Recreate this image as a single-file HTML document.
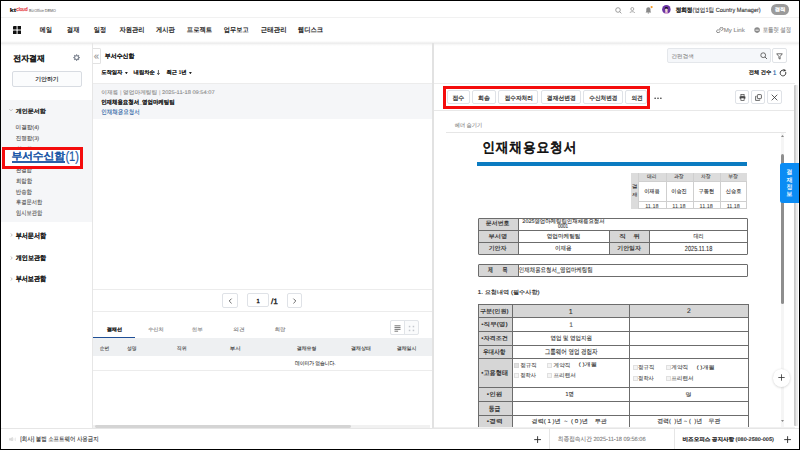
<!DOCTYPE html>
<html><head><meta charset="utf-8">
<style>
*{box-sizing:border-box;margin:0;padding:0}
html,body{width:800px;height:450px;overflow:hidden;background:#fff}
body{position:relative;font-family:"Liberation Sans",sans-serif;color:#222}
.a{position:absolute}
.t{position:absolute;white-space:nowrap;line-height:1}
.ln{position:absolute;background:#e9e9e9}
.btn{position:absolute;border:1px solid #dfe2e7;border-radius:2px;background:#fff}
.tx{position:absolute;left:0;top:0;overflow:visible}
.tx text{white-space:pre;font-family:"Liberation Sans",sans-serif;text-rendering:geometricPrecision}
.cb{position:absolute;width:5px;height:5px;border:0.6px solid #e0e0e0;background:#f4f4f4}
</style></head><body>

<!-- ===== TOP BAR ===== -->
<div class="ln" style="left:0;top:16.9px;width:800px;height:1px;background:#f1f1f1"></div>
<svg class="a" style="left:614.5px;top:6.8px" width="7" height="7" viewBox="0 0 7 7"><circle cx="3" cy="3" r="2.3" fill="none" stroke="#888" stroke-width="0.8"/><path d="M4.7 4.7L6.4 6.4" stroke="#888" stroke-width="0.8"/></svg>
<svg class="a" style="left:629.3px;top:6.8px" width="7" height="6.5" viewBox="0 0 7 6.5"><circle cx="3.3" cy="2" r="1.5" fill="none" stroke="#888" stroke-width="0.7"/><path d="M0.8 6.2C1 4.2 5.6 4.2 5.8 6.2" fill="none" stroke="#888" stroke-width="0.7"/></svg>
<svg class="a" style="left:644.5px;top:5.5px" width="9" height="8" viewBox="0 0 9 8"><path d="M0.6 6.4h5.6L5.5 5.3V3.4C5.5 2 4.6 1.2 3.4 1.2S1.3 2 1.3 3.4v1.9z" fill="#888"/><rect x="2.6" y="6.6" width="1.6" height="0.8" rx="0.4" fill="#888"/><circle cx="6.6" cy="1.1" r="1.1" fill="#f59a23"/></svg>
<svg class="a" style="left:662.4px;top:4.9px" width="8.8" height="8.8" viewBox="0 0 8.8 8.8"><defs><clipPath id="av"><circle cx="4.4" cy="4.4" r="4.3"/></clipPath></defs><g clip-path="url(#av)"><rect width="8.8" height="8.8" fill="#6b35a3"/><rect x="2.6" y="7.2" width="3.6" height="2" rx="1" fill="#f0b6d8"/><rect x="3.2" y="3.6" width="2.4" height="3.6" rx="0.9" fill="#f3d8d0"/><path d="M2.7 4.4C2.6 2.6 3.3 2.1 4.4 2.1S6.2 2.6 6.1 4.4L5.5 3.4H3.3z" fill="#1b1420"/></g></svg>
<div class="a" style="left:771.2px;top:4.1px;width:17.6px;height:10.5px;border-radius:5.3px;background:#9b9b9b"></div>

<!-- ===== NAV ===== -->
<svg class="a" style="left:12.6px;top:25.9px" width="8.2" height="8.2" viewBox="0 0 8.2 8.2"><rect x="0" y="0" width="3.6" height="3.6" rx="0.5" fill="#111"/><rect x="4.6" y="0" width="3.6" height="3.6" rx="0.5" fill="#111"/><rect x="0" y="4.6" width="3.6" height="3.6" rx="0.5" fill="#111"/><rect x="4.6" y="4.6" width="3.6" height="3.6" rx="0.5" fill="#111"/></svg>
<svg class="a" style="left:715.5px;top:27px" width="8" height="6" viewBox="0 0 8 6"><path d="M3.4 1.8L4.6 0.7a1.4 1.4 0 0 1 2 2L5.4 3.9M4.3 4.3L3.1 5.4a1.4 1.4 0 0 1-2-2L2.3 2.2M2.9 3.6l2-2" fill="none" stroke="#777" stroke-width="1"/></svg>
<svg class="a" style="left:753.9px;top:27px" width="6.2" height="6.2" viewBox="0 0 6.2 6.2"><circle cx="3.1" cy="3.1" r="2.8" fill="#8a8a8a"/><rect x="1.5" y="2.7" width="3.2" height="0.9" fill="#fff"/></svg>
<div class="a" style="left:0;top:41.2px;width:800px;height:4.4px;background:linear-gradient(180deg,rgba(0,0,0,0) 0,rgba(0,0,0,0.075) 45%,rgba(0,0,0,0.03) 70%,rgba(0,0,0,0) 100%)"></div>

<!-- ===== SIDEBAR ===== -->
<svg class="a" style="left:72.9px;top:53.7px" width="7.2" height="7.2" viewBox="0 0 10 10"><g fill="#848a96"><rect x="4.25" y="0.3" width="1.5" height="1.8" transform="rotate(0 5 5)"/><rect x="4.25" y="0.3" width="1.5" height="1.8" transform="rotate(45 5 5)"/><rect x="4.25" y="0.3" width="1.5" height="1.8" transform="rotate(90 5 5)"/><rect x="4.25" y="0.3" width="1.5" height="1.8" transform="rotate(135 5 5)"/><rect x="4.25" y="0.3" width="1.5" height="1.8" transform="rotate(180 5 5)"/><rect x="4.25" y="0.3" width="1.5" height="1.8" transform="rotate(225 5 5)"/><rect x="4.25" y="0.3" width="1.5" height="1.8" transform="rotate(270 5 5)"/><rect x="4.25" y="0.3" width="1.5" height="1.8" transform="rotate(315 5 5)"/></g><circle cx="5" cy="5" r="2.85" fill="none" stroke="#848a96" stroke-width="1.7"/></svg>
<div class="btn" style="left:11.5px;top:71px;width:70.5px;height:16.2px;background:#fbfcfd;border-color:#d8dce2"></div>

<div class="a" style="left:1px;top:100px;width:91px;height:122px;background:#f5f6f8"></div>
<svg class="a" style="left:9.3px;top:108.2px" width="4" height="4" viewBox="0 0 4 4"><path d="M0.4 1.2L2 2.8L3.6 1.2" fill="none" stroke="#999" stroke-width="0.6"/></svg>
<svg class="tx" width="800" height="450" viewBox="0 0 800 450"><text x="16.67" y="150.57" textLength="15.31" lengthAdjust="spacingAndGlyphs" style="font-size:5.889px;fill:#555;stroke:#555;stroke-width:0.113px;">완료함</text><text x="15.95" y="171.97" textLength="15.93" lengthAdjust="spacingAndGlyphs" style="font-size:5.889px;fill:#555;stroke:#555;stroke-width:0.113px;">완결함</text></svg>
<div class="a" style="left:1.7px;top:147.1px;width:81.5px;height:21.9px;border:3px solid #f40c0c;background:#fff"></div>
<div class="a" style="left:11.8px;top:161.4px;width:53.4px;height:1.3px;background:#2a5fa8"></div>
<svg class="a" style="left:9.7px;top:233.2px" width="3" height="4" viewBox="0 0 3 4"><path d="M0.6 0.4L2.3 2L0.6 3.6" fill="none" stroke="#999" stroke-width="0.6"/></svg>
<svg class="a" style="left:9.7px;top:255.6px" width="3" height="4" viewBox="0 0 3 4"><path d="M0.6 0.4L2.3 2L0.6 3.6" fill="none" stroke="#999" stroke-width="0.6"/></svg>
<svg class="a" style="left:9.7px;top:276.6px" width="3" height="4" viewBox="0 0 3 4"><path d="M0.6 0.4L2.3 2L0.6 3.6" fill="none" stroke="#999" stroke-width="0.6"/></svg>

<div class="ln" style="left:92px;top:43px;width:1px;height:385px;background:#e6e6e6"></div>

<!-- ===== LIST PANEL ===== -->
<div class="a" style="left:92.8px;top:48.2px;width:8.2px;height:16.2px;border:0.8px solid #e2e2e2;border-left:none;background:#fff;border-radius:0 1.5px 1.5px 0"></div>
<div class="ln" style="left:93px;top:83px;width:702px;height:0.8px;background:#ececec"></div>
<svg class="a" style="left:124.9px;top:71.6px" width="2.8" height="2.4" viewBox="0 0 2.8 2.4"><path d="M0 0H2.8L1.4 2.4z" fill="#222"/></svg>
<svg class="a" style="left:189.1px;top:71.6px" width="2.8" height="2.4" viewBox="0 0 2.8 2.4"><path d="M0 0H2.8L1.4 2.4z" fill="#222"/></svg>
<svg class="a" style="left:157.4px;top:70.2px" width="2.8" height="5" viewBox="0 0 2.8 5"><path d="M1.4 0V4.4M0.2 3.1L1.4 4.6L2.6 3.1" fill="none" stroke="#222" stroke-width="0.75"/></svg>
<div class="a" style="left:93px;top:83.8px;width:339px;height:35.7px;background:#f5f6f8"></div>

<div class="ln" style="left:93px;top:289px;width:339px;height:0.8px;background:#ececec"></div>
<div class="btn" style="left:222.3px;top:293.3px;width:15.4px;height:14.3px"></div>
<svg class="a" style="left:227.5px;top:297.5px" width="5" height="6" viewBox="0 0 5 6"><path d="M3.6 0.6L1.2 3L3.6 5.4" fill="none" stroke="#444" stroke-width="0.8"/></svg>
<div class="btn" style="left:246.6px;top:293.3px;width:22.8px;height:14px"></div>
<div class="btn" style="left:287.4px;top:293.3px;width:15px;height:14.3px"></div>
<svg class="a" style="left:292.4px;top:297.5px" width="5" height="6" viewBox="0 0 5 6"><path d="M1.4 0.6L3.8 3L1.4 5.4" fill="none" stroke="#444" stroke-width="0.8"/></svg>
<div class="ln" style="left:93px;top:311px;width:339px;height:0.8px;background:#ececec"></div>

<div class="a" style="left:93px;top:336.6px;width:41.5px;height:1.8px;background:#1f4f96"></div>
<div class="a" style="left:390.3px;top:320.2px;width:28.7px;height:15.3px;border:0.8px solid #e1e4e8;border-radius:2px;background:#fafbfc"></div>
<div class="a" style="left:390.3px;top:320.2px;width:14.6px;height:15.3px;border:0.8px solid #e1e4e8;border-radius:2px 0 0 2px;background:#fff"></div>
<svg class="a" style="left:393.8px;top:324.6px" width="7" height="7" viewBox="0 0 7 7"><path d="M0.5 0.8h6M0.5 2.6h6M0.5 4.4h6M0.5 6.2h3.6" stroke="#666" stroke-width="0.9"/></svg>
<svg class="a" style="left:408.2px;top:324.6px" width="7" height="7" viewBox="0 0 7 7"><rect x="0.8" y="0.8" width="1.5" height="1.5" fill="#c4c8ce"/><rect x="4.7" y="0.8" width="1.5" height="1.5" fill="#c4c8ce"/><rect x="0.8" y="4.7" width="1.5" height="1.5" fill="#c4c8ce"/><rect x="4.7" y="4.7" width="1.5" height="1.5" fill="#c4c8ce"/></svg>

<div class="a" style="left:93px;top:338.4px;width:339px;height:17.3px;background:#eef0f2"></div>
<div class="ln" style="left:93px;top:370px;width:339px;height:0.8px;background:#ececec"></div>

<div class="a" style="left:93px;top:424.8px;width:337px;height:2.9px;background:#f1f1f1"></div>
<div class="a" style="left:95px;top:424.8px;width:256px;height:2.9px;background:#d4d4d4;border-radius:1.4px"></div>

<div class="a" style="left:431.9px;top:43px;width:2px;height:385px;background:#e2e2e2"></div>

<!-- ===== HEADER RIGHT (search) ===== -->
<div class="a" style="left:667.4px;top:48.4px;width:103.6px;height:14.2px;border:0.8px solid #e4e7eb;border-radius:2px;background:#f5f7fa"></div>
<svg class="a" style="left:760px;top:51.8px" width="7.5" height="7.5" viewBox="0 0 7.5 7.5"><circle cx="3.2" cy="3.2" r="2.4" fill="none" stroke="#555" stroke-width="0.85"/><path d="M5 5L7 7" stroke="#555" stroke-width="0.9"/></svg>
<div class="btn" style="left:772.4px;top:48.4px;width:14.6px;height:14.6px;border-color:#e0e3e7"></div>
<svg class="a" style="left:776.4px;top:52.6px" width="7" height="7" viewBox="0 0 7 7"><path d="M0.7 0.8h5.6L4.1 3.5v2.6L2.9 5.5V3.5z" fill="none" stroke="#444" stroke-width="0.75" stroke-linejoin="round"/></svg>
<svg class="a" style="left:779.3px;top:69.3px" width="8" height="8" viewBox="0 0 8 8"><path d="M6.58 2.80A2.85 2.85 0 1 1 4.25 1.16" fill="none" stroke="#333" stroke-width="0.95"/><path d="M4.3 -0.1L7.3 1.3L4.6 2.7z" fill="#333"/></svg>

<!-- ===== DOC TOOLBAR ===== -->
<div class="btn" style="left:447.1px;top:89.9px;width:23.1px;height:14.4px"></div>
<div class="btn" style="left:472.1px;top:89.9px;width:23.8px;height:14.4px"></div>
<div class="btn" style="left:498px;top:89.9px;width:40.4px;height:14.4px"></div>
<div class="btn" style="left:541.3px;top:89.9px;width:39.3px;height:14.4px"></div>
<div class="btn" style="left:583.1px;top:89.9px;width:39.5px;height:14.4px"></div>
<div class="btn" style="left:625.4px;top:89.9px;width:22px;height:14.4px"></div>
<div class="a" style="left:442.8px;top:86.1px;width:207.4px;height:22.5px;border:3.1px solid #f40c0c"></div>
<svg class="a" style="left:653.6px;top:96.6px" width="8" height="2.4" viewBox="0 0 8 2.4"><circle cx="1.1" cy="1.2" r="0.75" fill="#222"/><circle cx="4" cy="1.2" r="0.75" fill="#222"/><circle cx="6.9" cy="1.2" r="0.75" fill="#222"/></svg>

<div class="btn" style="left:735.2px;top:90.2px;width:13.8px;height:14.1px"></div>
<svg class="a" style="left:738.6px;top:93.6px" width="7" height="7" viewBox="0 0 7 7"><rect x="1.9" y="0.6" width="3.2" height="1.6" fill="none" stroke="#444" stroke-width="0.7"/><rect x="0.6" y="2.2" width="5.8" height="2.6" rx="0.6" fill="#444"/><rect x="1.9" y="3.9" width="3.2" height="2.5" fill="#fff" stroke="#444" stroke-width="0.7"/></svg>
<div class="btn" style="left:751.2px;top:90.2px;width:14.3px;height:14.1px"></div>
<svg class="a" style="left:754.8px;top:93.6px" width="7" height="7" viewBox="0 0 7 7"><rect x="2.4" y="0.6" width="4" height="4" rx="0.6" fill="none" stroke="#444" stroke-width="0.8"/><path d="M1.5 2.3H0.6V6.4H4.7V5.5" fill="none" stroke="#444" stroke-width="0.8"/></svg>
<div class="btn" style="left:767.3px;top:90.2px;width:14.3px;height:14.1px"></div>
<svg class="a" style="left:770.9px;top:93.6px" width="7" height="7" viewBox="0 0 7 7"><path d="M0.7 0.7L6.3 6.3M6.3 0.7L0.7 6.3" stroke="#333" stroke-width="0.8"/></svg>
<div class="ln" style="left:434px;top:110px;width:361px;height:0.8px;background:#e8e8e8"></div>

<!-- right page scrollbar -->
<div class="a" style="left:794.4px;top:85px;width:3.8px;height:341px;background:linear-gradient(90deg,#c4c4c4 0,#cfcfcf 35%,#e9e9e9 60%,#ececec 100%);border-radius:1px"></div>

<!-- ===== DOC CONTENT ===== -->
<div class="ln" style="left:446.2px;top:132.2px;width:339.5px;height:0.8px;background:#e6e6e6"></div>
<div class="a" style="left:780.7px;top:133px;width:3.5px;height:294px;background:#f5f5f5"></div>
<svg class="a" style="left:780.9px;top:134.8px" width="3" height="2" viewBox="0 0 3 2"><path d="M0 2L1.5 0L3 2z" fill="#888"/></svg>
<div class="a" style="left:780.8px;top:153.7px;width:3.1px;height:150.5px;background:#8e8e8e;border-radius:1.5px"></div>
<svg class="a" style="left:780.9px;top:420px" width="3" height="2" viewBox="0 0 3 2"><path d="M0 0L1.5 2L3 0z" fill="#888"/></svg>

<div class="a" style="left:477.1px;top:162.2px;width:270.4px;height:3.8px;background:#0b7bc1"></div>

<!-- approval table -->
<div class="a" style="left:630.5px;top:172.9px;width:116.5px;height:36.3px;background:#fff;border:0.8px solid #cfcfcf"></div>
<div class="a" style="left:630.5px;top:172.9px;width:7.9px;height:36.3px;background:#dcdcdc"></div>
<div class="a" style="left:638.4px;top:172.9px;width:108.6px;height:7.7px;background:#dcdcdc"></div>
<div class="ln" style="left:638.4px;top:180.6px;width:108.6px;height:0.8px;background:#cfcfcf"></div>
<div class="ln" style="left:638.4px;top:201.3px;width:108.6px;height:0.8px;background:#cfcfcf"></div>
<div class="ln" style="left:638.4px;top:172.9px;width:0.8px;height:36.3px;background:#cfcfcf"></div>
<div class="ln" style="left:665.5px;top:172.9px;width:0.8px;height:36.3px;background:#cfcfcf"></div>
<div class="ln" style="left:692.7px;top:172.9px;width:0.8px;height:36.3px;background:#cfcfcf"></div>
<div class="ln" style="left:719.8px;top:172.9px;width:0.8px;height:36.3px;background:#cfcfcf"></div>

<!-- doc info table -->
<div class="a" style="left:477.5px;top:217.5px;width:270.4px;height:37.2px;border:1px solid #6c6c6c;border-radius:1px;background:#fff"></div>
<div class="a" style="left:478.5px;top:218.5px;width:39px;height:35.2px;background:#d6d6d6"></div>
<div class="a" style="left:608.8px;top:230.3px;width:40.6px;height:23.4px;background:#d6d6d6"></div>
<div class="ln" style="left:517.5px;top:217.5px;width:1px;height:37.2px;background:#6c6c6c"></div>
<div class="ln" style="left:477.5px;top:229.8px;width:270.4px;height:1px;background:#6c6c6c"></div>
<div class="ln" style="left:477.5px;top:241.8px;width:270.4px;height:1px;background:#6c6c6c"></div>
<div class="ln" style="left:608.8px;top:230.3px;width:1px;height:24.4px;background:#6c6c6c"></div>
<div class="ln" style="left:649.4px;top:230.3px;width:1px;height:24.4px;background:#6c6c6c"></div>

<div class="a" style="left:477.5px;top:263.5px;width:270.4px;height:13.9px;border:1px solid #6c6c6c;border-radius:1px;background:#fff"></div>
<div class="a" style="left:478.5px;top:264.5px;width:39px;height:11.9px;background:#d6d6d6"></div>
<div class="ln" style="left:517.5px;top:263.5px;width:1px;height:13.9px;background:#6c6c6c"></div>

<!-- main table -->
<div class="a" style="left:434px;top:300px;width:346px;height:126.5px;overflow:hidden">
<div class="a" style="left:43.5px;top:4.2px;width:271.3px;height:140px;border:1px solid #6c6c6c;background:#fff"></div>
<div class="a" style="left:44.5px;top:5.2px;width:33.1px;height:140px;background:#d6d6d6"></div>
<div class="a" style="left:44.5px;top:5.2px;width:269.3px;height:12.5px;background:#d6d6d6"></div>
<div class="ln" style="left:77.6px;top:4.2px;width:1px;height:140px;background:#6c6c6c"></div>
<div class="ln" style="left:195.3px;top:4.2px;width:1px;height:140px;background:#6c6c6c"></div>
<div class="ln" style="left:43.5px;top:17.3px;width:271.3px;height:1px;background:#6c6c6c"></div>
<div class="ln" style="left:43.5px;top:31px;width:271.3px;height:1px;background:#6c6c6c"></div>
<div class="ln" style="left:43.5px;top:45.1px;width:271.3px;height:1px;background:#6c6c6c"></div>
<div class="ln" style="left:43.5px;top:58px;width:271.3px;height:1px;background:#6c6c6c"></div>
<div class="ln" style="left:43.5px;top:87px;width:271.3px;height:1px;background:#6c6c6c"></div>
<div class="ln" style="left:43.5px;top:100.8px;width:271.3px;height:1px;background:#6c6c6c"></div>
<div class="ln" style="left:43.5px;top:115.3px;width:271.3px;height:1px;background:#6c6c6c"></div>
</div>
<div class="ln" style="left:434px;top:426.5px;width:361px;height:1px;background:#f0f0f0"></div>
<!-- checkboxes -->
<div class="cb" style="left:514.2px;top:362.6px;background:#e0e0e0;border-color:#d6d6d6"></div>
<div class="cb" style="left:547.2px;top:362.6px"></div>
<div class="cb" style="left:514.2px;top:373.1px"></div>
<div class="cb" style="left:547.2px;top:373.1px"></div>
<div class="cb" style="left:632.6px;top:365.4px"></div>
<div class="cb" style="left:665.8px;top:365.4px"></div>
<div class="cb" style="left:632.6px;top:376.1px"></div>
<div class="cb" style="left:665.8px;top:376.1px"></div>

<!-- floating buttons -->
<div class="a" style="left:772.7px;top:368.5px;width:17.8px;height:18.3px;border-radius:50%;background:#fff;box-shadow:0 0.5px 2.5px rgba(0,0,0,0.2)"></div>
<svg class="a" style="left:778.1px;top:374.1px" width="7" height="7" viewBox="0 0 7 7"><path d="M3.5 0.3V6.7M0.3 3.5H6.7" stroke="#333" stroke-width="0.8"/></svg>
<div class="a" style="left:779.6px;top:162.8px;width:19.2px;height:40.5px;background:#0b8cf4;border-radius:2.5px 0 0 2.5px"></div>

<svg class="tx" width="800" height="450" viewBox="0 0 800 450"><text x="9.72" y="11.55" textLength="6.34" lengthAdjust="spacingAndGlyphs" style="font-size:5.379px;font-weight:bold;fill:#111;stroke:#111;stroke-width:0.150px;">kt</text><text x="16.31" y="11.41" textLength="11.35" lengthAdjust="spacingAndGlyphs" style="font-size:5.467px;fill:#e42a30;stroke:#e42a30;stroke-width:0.200px;">cloud</text><text x="29.07" y="11.64" textLength="26.91" lengthAdjust="spacingAndGlyphs" style="font-size:4.267px;fill:#888;stroke:#888;stroke-width:0.113px;">BizOffice DEMO</text><text x="675.67" y="11.74" textLength="85.07" lengthAdjust="spacingAndGlyphs" style="font-size:6.051px;fill:#333;stroke:#333;stroke-width:0.113px;"><tspan font-weight="bold">정희정</tspan>(영업1팀 Country Manager)</text><text x="774.78" y="10.91" textLength="10.63" lengthAdjust="spacingAndGlyphs" style="font-size:4.779px;font-weight:bold;fill:#fff;stroke:#fff;stroke-width:0.062px;">경직</text><text x="39.85" y="32.34" textLength="12.11" lengthAdjust="spacingAndGlyphs" style="font-size:6.703px;font-weight:bold;fill:#222;">메일</text><text x="66.87" y="32.34" textLength="12.78" lengthAdjust="spacingAndGlyphs" style="font-size:6.703px;font-weight:bold;fill:#222;">결재</text><text x="93.68" y="32.34" textLength="12.44" lengthAdjust="spacingAndGlyphs" style="font-size:6.703px;font-weight:bold;fill:#222;">일정</text><text x="119.49" y="32.34" textLength="25.14" lengthAdjust="spacingAndGlyphs" style="font-size:6.703px;font-weight:bold;fill:#222;">자원관리</text><text x="155.99" y="32.34" textLength="18.86" lengthAdjust="spacingAndGlyphs" style="font-size:6.703px;font-weight:bold;fill:#222;">게시판</text><text x="186.83" y="32.34" textLength="25.33" lengthAdjust="spacingAndGlyphs" style="font-size:6.703px;font-weight:bold;fill:#222;">프로젝트</text><text x="223.68" y="32.34" textLength="24.98" lengthAdjust="spacingAndGlyphs" style="font-size:6.703px;font-weight:bold;fill:#222;">업무보고</text><text x="260.83" y="32.34" textLength="25.83" lengthAdjust="spacingAndGlyphs" style="font-size:6.703px;font-weight:bold;fill:#222;">근태관리</text><text x="297.83" y="32.34" textLength="25.33" lengthAdjust="spacingAndGlyphs" style="font-size:6.703px;font-weight:bold;fill:#222;">웹디스크</text><text x="723.69" y="31.94" textLength="21.03" lengthAdjust="spacingAndGlyphs" style="font-size:5.784px;fill:#8a8a8a;stroke:#8a8a8a;stroke-width:0.113px;">My Link</text><text x="762.65" y="32.07" textLength="28.43" lengthAdjust="spacingAndGlyphs" style="font-size:6.556px;fill:#8a8a8a;stroke:#8a8a8a;stroke-width:0.113px;">포틀릿 설정</text><text x="13.26" y="61.15" textLength="31.58" lengthAdjust="spacingAndGlyphs" style="font-size:8.000px;font-weight:bold;fill:#1a1a1a;stroke:#1a1a1a;stroke-width:0.062px;">전자결재</text><text x="35.21" y="80.98" textLength="23.52" lengthAdjust="spacingAndGlyphs" style="font-size:5.778px;fill:#222;stroke:#222;stroke-width:0.150px;">기안하기</text><text x="15.80" y="112.84" textLength="30.05" lengthAdjust="spacingAndGlyphs" style="font-size:5.789px;font-weight:bold;fill:#333;stroke:#333;stroke-width:0.062px;">개인문서함</text><text x="15.59" y="129.26" textLength="23.52" lengthAdjust="spacingAndGlyphs" style="font-size:5.474px;fill:#555;stroke:#555;stroke-width:0.113px;">미결함(4)</text><text x="15.73" y="139.76" textLength="23.38" lengthAdjust="spacingAndGlyphs" style="font-size:5.474px;fill:#555;stroke:#555;stroke-width:0.113px;">진행함(3)</text><text x="15.95" y="182.93" textLength="16.03" lengthAdjust="spacingAndGlyphs" style="font-size:6.111px;fill:#555;stroke:#555;stroke-width:0.113px;">회람함</text><text x="15.81" y="193.53" textLength="16.17" lengthAdjust="spacingAndGlyphs" style="font-size:6.111px;fill:#555;stroke:#555;stroke-width:0.113px;">반송함</text><text x="15.96" y="204.28" textLength="26.33" lengthAdjust="spacingAndGlyphs" style="font-size:5.778px;fill:#555;stroke:#555;stroke-width:0.113px;">후결문서함</text><text x="15.96" y="215.02" textLength="26.33" lengthAdjust="spacingAndGlyphs" style="font-size:6.222px;fill:#555;stroke:#555;stroke-width:0.113px;">임시보관함</text><text x="11.41" y="159.26" textLength="53.64" lengthAdjust="spacingAndGlyphs" style="font-size:9.684px;font-weight:bold;fill:#1e5aa8;stroke:#1e5aa8;stroke-width:0.062px;">부서수신함</text><text x="65.39" y="160.50" textLength="13.69" lengthAdjust="spacingAndGlyphs" style="font-size:13.730px;fill:#1e5aa8;stroke:#1e5aa8;stroke-width:0.200px;">(1)</text><text x="15.65" y="237.82" textLength="30.40" lengthAdjust="spacingAndGlyphs" style="font-size:7.053px;font-weight:bold;fill:#222;stroke:#222;stroke-width:0.062px;">부서문서함</text><text x="15.80" y="259.81" textLength="30.25" lengthAdjust="spacingAndGlyphs" style="font-size:6.526px;font-weight:bold;fill:#222;stroke:#222;stroke-width:0.062px;">개인보관함</text><text x="15.65" y="281.13" textLength="30.40" lengthAdjust="spacingAndGlyphs" style="font-size:6.947px;font-weight:bold;fill:#222;stroke:#222;stroke-width:0.062px;">부서보관함</text><text x="93.78" y="58.63" textLength="5.27" lengthAdjust="spacingAndGlyphs" style="font-size:9.067px;fill:#999;stroke:#999;stroke-width:0.113px;">«</text><text x="104.86" y="57.60" textLength="29.49" lengthAdjust="spacingAndGlyphs" style="font-size:6.000px;font-weight:bold;fill:#1a1a1a;stroke:#1a1a1a;stroke-width:0.062px;">부서수신함</text><text x="101.18" y="74.13" textLength="21.27" lengthAdjust="spacingAndGlyphs" style="font-size:5.263px;font-weight:bold;fill:#222;stroke:#222;stroke-width:0.050px;">도착일자</text><text x="133.58" y="74.13" textLength="21.23" lengthAdjust="spacingAndGlyphs" style="font-size:5.263px;font-weight:bold;fill:#222;stroke:#222;stroke-width:0.050px;">내림차순</text><text x="166.39" y="74.24" textLength="20.24" lengthAdjust="spacingAndGlyphs" style="font-size:5.405px;font-weight:bold;fill:#222;stroke:#222;stroke-width:0.050px;">최근 1년</text><text x="101.18" y="94.07" textLength="113.52" lengthAdjust="spacingAndGlyphs" style="font-size:5.222px;fill:#8c8c8c;stroke:#8c8c8c;stroke-width:0.113px;">이재용 <tspan style="fill:#ccc">|</tspan> 영업마케팅팀 <tspan style="fill:#ccc">|</tspan> 2025-11-18 09:54:07</text><text x="101.21" y="103.64" textLength="73.35" lengthAdjust="spacingAndGlyphs" style="font-size:5.789px;font-weight:bold;fill:#222;stroke:#222;stroke-width:0.062px;">인재채용요청서_영업마케팅팀</text><text x="101.20" y="113.90" textLength="38.47" lengthAdjust="spacingAndGlyphs" style="font-size:6.333px;fill:#1e5aa0;stroke:#1e5aa0;stroke-width:0.113px;">인재채용요청서</text><text x="256.61" y="303.15" textLength="3.26" lengthAdjust="spacingAndGlyphs" style="font-size:5.857px;fill:#222;stroke:#222;stroke-width:0.350px;">1</text><text x="271.05" y="303.56" textLength="6.88" lengthAdjust="spacingAndGlyphs" style="font-size:7.600px;fill:#222;stroke:#222;stroke-width:0.350px;">/1</text><text x="106.66" y="330.84" textLength="15.50" lengthAdjust="spacingAndGlyphs" style="font-size:4.757px;font-weight:bold;fill:#222;stroke:#222;stroke-width:0.062px;">결재선</text><text x="148.16" y="330.82" textLength="15.46" lengthAdjust="spacingAndGlyphs" style="font-size:4.889px;fill:#777;stroke:#777;stroke-width:0.113px;">수신처</text><text x="191.73" y="330.82" textLength="11.14" lengthAdjust="spacingAndGlyphs" style="font-size:4.889px;fill:#999;stroke:#999;stroke-width:0.113px;">첨부</text><text x="233.22" y="330.82" textLength="11.33" lengthAdjust="spacingAndGlyphs" style="font-size:4.889px;fill:#777;stroke:#777;stroke-width:0.113px;">의견</text><text x="274.75" y="330.82" textLength="10.63" lengthAdjust="spacingAndGlyphs" style="font-size:4.889px;fill:#777;stroke:#777;stroke-width:0.113px;">회람</text><text x="99.79" y="349.52" textLength="9.67" lengthAdjust="spacingAndGlyphs" style="font-size:4.889px;fill:#444;stroke:#444;stroke-width:0.113px;">순번</text><text x="126.91" y="349.52" textLength="9.67" lengthAdjust="spacingAndGlyphs" style="font-size:4.889px;fill:#444;stroke:#444;stroke-width:0.113px;">성명</text><text x="176.78" y="349.52" textLength="9.80" lengthAdjust="spacingAndGlyphs" style="font-size:4.889px;fill:#444;stroke:#444;stroke-width:0.113px;">직위</text><text x="229.74" y="349.52" textLength="10.93" lengthAdjust="spacingAndGlyphs" style="font-size:4.889px;fill:#444;stroke:#444;stroke-width:0.113px;">부서</text><text x="296.65" y="349.52" textLength="19.95" lengthAdjust="spacingAndGlyphs" style="font-size:4.889px;fill:#444;stroke:#444;stroke-width:0.113px;">결재유형</text><text x="351.05" y="349.52" textLength="19.92" lengthAdjust="spacingAndGlyphs" style="font-size:4.889px;fill:#444;stroke:#444;stroke-width:0.113px;">결재상태</text><text x="396.65" y="349.52" textLength="19.95" lengthAdjust="spacingAndGlyphs" style="font-size:4.889px;fill:#444;stroke:#444;stroke-width:0.113px;">결재일시</text><text x="294.91" y="364.75" textLength="40.72" lengthAdjust="spacingAndGlyphs" style="font-size:5.333px;fill:#444;stroke:#444;stroke-width:0.113px;">데이터가 없습니다.</text><text x="671.60" y="57.50" textLength="22.08" lengthAdjust="spacingAndGlyphs" style="font-size:5.000px;fill:#8a8a8a;stroke:#8a8a8a;stroke-width:0.113px;">간편검색</text><text x="748.76" y="74.07" textLength="22.51" lengthAdjust="spacingAndGlyphs" style="font-size:5.222px;fill:#222;stroke:#222;stroke-width:0.275px;">전체 건수</text><text x="772.65" y="74.85" textLength="3.73" lengthAdjust="spacingAndGlyphs" style="font-size:6.714px;fill:#1e5aa0;stroke:#1e5aa0;stroke-width:0.113px;">1</text><text x="452.46" y="99.55" textLength="11.84" lengthAdjust="spacingAndGlyphs" style="font-size:6.000px;fill:#333;stroke:#333;stroke-width:0.250px;">접수</text><text x="478.11" y="99.55" textLength="11.78" lengthAdjust="spacingAndGlyphs" style="font-size:6.000px;fill:#333;stroke:#333;stroke-width:0.250px;">회송</text><text x="504.73" y="99.55" textLength="28.06" lengthAdjust="spacingAndGlyphs" style="font-size:6.000px;fill:#333;stroke:#333;stroke-width:0.250px;">접수자처리</text><text x="546.87" y="99.55" textLength="28.84" lengthAdjust="spacingAndGlyphs" style="font-size:6.000px;fill:#333;stroke:#333;stroke-width:0.250px;">결재선변경</text><text x="589.33" y="99.55" textLength="28.06" lengthAdjust="spacingAndGlyphs" style="font-size:6.000px;fill:#333;stroke:#333;stroke-width:0.250px;">수신처변경</text><text x="631.43" y="99.55" textLength="11.33" lengthAdjust="spacingAndGlyphs" style="font-size:6.000px;fill:#333;stroke:#333;stroke-width:0.250px;">의견</text><text x="454.82" y="127.02" textLength="27.32" lengthAdjust="spacingAndGlyphs" style="font-size:5.556px;fill:#8a8a8a;stroke:#8a8a8a;stroke-width:0.113px;">헤더 숨기기</text><text transform="translate(482.18 152.08) scale(0.92 1)" style="font-size:13.778px;letter-spacing:1.004px;fill:#111;stroke:#111;stroke-width:0.750px;">인재채용요청서</text><text x="646.91" y="178.00" textLength="9.50" lengthAdjust="spacingAndGlyphs" style="font-size:5.000px;fill:#444;stroke:#444;stroke-width:0.113px;">대리</text><text x="674.01" y="178.00" textLength="9.50" lengthAdjust="spacingAndGlyphs" style="font-size:5.000px;fill:#444;stroke:#444;stroke-width:0.113px;">과장</text><text x="701.09" y="178.00" textLength="9.50" lengthAdjust="spacingAndGlyphs" style="font-size:5.000px;fill:#444;stroke:#444;stroke-width:0.113px;">차장</text><text x="728.19" y="178.00" textLength="9.50" lengthAdjust="spacingAndGlyphs" style="font-size:5.000px;fill:#444;stroke:#444;stroke-width:0.113px;">부장</text><text x="644.13" y="192.93" textLength="15.52" lengthAdjust="spacingAndGlyphs" style="font-size:5.444px;fill:#333;stroke:#333;stroke-width:0.113px;">이재용</text><text x="671.23" y="192.93" textLength="15.52" lengthAdjust="spacingAndGlyphs" style="font-size:5.444px;fill:#333;stroke:#333;stroke-width:0.113px;">이승진</text><text x="698.56" y="192.93" textLength="15.52" lengthAdjust="spacingAndGlyphs" style="font-size:5.444px;fill:#333;stroke:#333;stroke-width:0.113px;">구동현</text><text x="725.79" y="192.93" textLength="15.52" lengthAdjust="spacingAndGlyphs" style="font-size:5.444px;fill:#333;stroke:#333;stroke-width:0.113px;">신승호</text><text x="645.24" y="207.61" textLength="13.27" lengthAdjust="spacingAndGlyphs" style="font-size:5.655px;fill:#333;stroke:#333;stroke-width:0.025px;">11.18</text><text x="672.34" y="207.61" textLength="13.27" lengthAdjust="spacingAndGlyphs" style="font-size:5.655px;fill:#333;stroke:#333;stroke-width:0.025px;">11.18</text><text x="699.54" y="207.61" textLength="13.27" lengthAdjust="spacingAndGlyphs" style="font-size:5.655px;fill:#333;stroke:#333;stroke-width:0.025px;">11.18</text><text x="726.64" y="207.61" textLength="13.27" lengthAdjust="spacingAndGlyphs" style="font-size:5.655px;fill:#333;stroke:#333;stroke-width:0.025px;">11.18</text><text x="631.77" y="188.44" textLength="5.81" lengthAdjust="spacingAndGlyphs" style="font-size:4.914px;fill:#333;stroke:#333;stroke-width:0.075px;">결</text><text x="632.22" y="196.23" textLength="5.29" lengthAdjust="spacingAndGlyphs" style="font-size:4.778px;fill:#333;stroke:#333;stroke-width:0.075px;">재</text><text x="485.85" y="225.49" textLength="23.69" lengthAdjust="spacingAndGlyphs" style="font-size:5.730px;font-weight:bold;fill:#333;">문서번호</text><text x="522.38" y="222.55" textLength="82.28" lengthAdjust="spacingAndGlyphs" style="font-size:5.333px;fill:#333;stroke:#333;stroke-width:0.113px;">2025영업마케팅팀인재채용요청서</text><text x="558.04" y="228.49" textLength="10.04" lengthAdjust="spacingAndGlyphs" style="font-size:6.207px;fill:#333;stroke:#333;stroke-width:0.113px;">0001</text><text x="488.64" y="237.89" textLength="18.58" lengthAdjust="spacingAndGlyphs" style="font-size:5.474px;font-weight:bold;fill:#333;">부서명</text><text x="546.73" y="237.98" textLength="33.77" lengthAdjust="spacingAndGlyphs" style="font-size:5.778px;fill:#333;stroke:#333;stroke-width:0.113px;">영업마케팅팀</text><text x="488.65" y="249.89" textLength="17.80" lengthAdjust="spacingAndGlyphs" style="font-size:5.730px;font-weight:bold;fill:#333;">기안자</text><text x="555.00" y="249.87" textLength="16.57" lengthAdjust="spacingAndGlyphs" style="font-size:5.889px;fill:#333;stroke:#333;stroke-width:0.113px;">이재용</text><text x="619.22" y="237.89" textLength="20.64" lengthAdjust="spacingAndGlyphs" style="font-size:5.474px;font-weight:bold;fill:#333;">직 &#160; &#160;위</text><text x="693.40" y="237.98" textLength="10.11" lengthAdjust="spacingAndGlyphs" style="font-size:5.778px;fill:#333;stroke:#333;stroke-width:0.113px;">대리</text><text x="617.36" y="249.89" textLength="23.49" lengthAdjust="spacingAndGlyphs" style="font-size:5.730px;font-weight:bold;fill:#333;">기안일자</text><text x="684.87" y="250.57" textLength="27.45" lengthAdjust="spacingAndGlyphs" style="font-size:7.310px;fill:#333;stroke:#333;stroke-width:0.113px;">2025.11.18</text><text x="487.95" y="272.49" textLength="19.62" lengthAdjust="spacingAndGlyphs" style="font-size:6.632px;font-weight:bold;fill:#333;">제 &#160; &#160; &#160; 목</text><text x="518.80" y="272.32" textLength="73.90" lengthAdjust="spacingAndGlyphs" style="font-size:6.632px;fill:#333;stroke:#333;stroke-width:0.113px;">인재채용요청서_영업마케팅팀</text><text x="477.89" y="294.13" textLength="61.70" lengthAdjust="spacingAndGlyphs" style="font-size:5.579px;fill:#222;stroke:#222;stroke-width:0.150px;">1. 요청내역 (필수사항)</text><text x="479.99" y="312.74" textLength="28.61" lengthAdjust="spacingAndGlyphs" style="font-size:5.538px;font-weight:bold;fill:#333;">구분(인원)</text><text x="568.81" y="313.65" textLength="3.97" lengthAdjust="spacingAndGlyphs" style="font-size:7.143px;fill:#333;stroke:#333;stroke-width:0.113px;">1</text><text x="687.01" y="313.35" textLength="3.73" lengthAdjust="spacingAndGlyphs" style="font-size:6.714px;fill:#333;stroke:#333;stroke-width:0.113px;">2</text><text x="481.29" y="325.86" textLength="26.34" lengthAdjust="spacingAndGlyphs" style="font-size:5.436px;font-weight:bold;fill:#333;">•직무(명)</text><text x="569.15" y="326.65" textLength="3.73" lengthAdjust="spacingAndGlyphs" style="font-size:6.714px;fill:#555;stroke:#555;stroke-width:0.113px;">1</text><text x="481.30" y="340.06" textLength="26.67" lengthAdjust="spacingAndGlyphs" style="font-size:5.684px;font-weight:bold;fill:#333;">•자격조건</text><text x="550.44" y="340.15" textLength="41.60" lengthAdjust="spacingAndGlyphs" style="font-size:6.000px;fill:#333;stroke:#333;stroke-width:0.113px;">영업 및 영업지원</text><text x="482.97" y="353.91" textLength="22.48" lengthAdjust="spacingAndGlyphs" style="font-size:6.526px;font-weight:bold;fill:#333;">우대사항</text><text x="544.73" y="354.02" textLength="52.89" lengthAdjust="spacingAndGlyphs" style="font-size:6.889px;fill:#333;stroke:#333;stroke-width:0.113px;">그룹웨어 영업 경험자</text><text x="481.30" y="374.99" textLength="26.83" lengthAdjust="spacingAndGlyphs" style="font-size:6.632px;font-weight:bold;fill:#333;">•고용형태</text><text x="486.88" y="395.89" textLength="15.53" lengthAdjust="spacingAndGlyphs" style="font-size:5.730px;font-weight:bold;fill:#333;">•인원</text><text x="565.45" y="395.87" textLength="8.30" lengthAdjust="spacingAndGlyphs" style="font-size:5.889px;fill:#333;stroke:#333;stroke-width:0.113px;">1명</text><text x="685.55" y="396.12" textLength="6.00" lengthAdjust="spacingAndGlyphs" style="font-size:4.889px;fill:#333;stroke:#333;stroke-width:0.113px;">명</text><text x="488.66" y="410.52" textLength="11.47" lengthAdjust="spacingAndGlyphs" style="font-size:7.000px;font-weight:bold;fill:#333;">등급</text><text x="486.88" y="422.97" textLength="15.70" lengthAdjust="spacingAndGlyphs" style="font-size:5.579px;font-weight:bold;fill:#333;">•경력</text><text x="531.59" y="422.83" textLength="75.33" lengthAdjust="spacingAndGlyphs" style="font-size:5.579px;fill:#333;stroke:#333;stroke-width:0.113px;">경력( 1 )년 &#160;~ &#160;( 0 )년 &#160; &#160;무관</text><text x="657.21" y="423.47" textLength="63.26" lengthAdjust="spacingAndGlyphs" style="font-size:5.895px;fill:#333;stroke:#333;stroke-width:0.113px;">경력( &#160;)년 ~ ( &#160;)년 &#160; &#160;무관</text><text x="520.45" y="366.53" textLength="16.11" lengthAdjust="spacingAndGlyphs" style="font-size:5.444px;fill:#555;stroke:#555;stroke-width:0.113px;">정규직</text><text x="553.57" y="366.53" textLength="16.71" lengthAdjust="spacingAndGlyphs" style="font-size:5.444px;fill:#555;stroke:#555;stroke-width:0.113px;">계약직</text><text x="578.85" y="366.32" textLength="17.93" lengthAdjust="spacingAndGlyphs" style="font-size:5.158px;fill:#333;stroke:#333;stroke-width:0.113px;">( )개월</text><text x="520.46" y="377.13" textLength="15.41" lengthAdjust="spacingAndGlyphs" style="font-size:5.444px;fill:#555;stroke:#555;stroke-width:0.113px;">정학사</text><text x="553.43" y="377.13" textLength="22.46" lengthAdjust="spacingAndGlyphs" style="font-size:5.444px;fill:#555;stroke:#555;stroke-width:0.113px;">프리랜서</text><text x="638.25" y="369.33" textLength="16.11" lengthAdjust="spacingAndGlyphs" style="font-size:5.444px;fill:#555;stroke:#555;stroke-width:0.113px;">정규직</text><text x="671.37" y="369.33" textLength="16.71" lengthAdjust="spacingAndGlyphs" style="font-size:5.444px;fill:#555;stroke:#555;stroke-width:0.113px;">계약직</text><text x="696.65" y="369.12" textLength="17.93" lengthAdjust="spacingAndGlyphs" style="font-size:5.158px;fill:#333;stroke:#333;stroke-width:0.113px;">( )개월</text><text x="638.26" y="380.03" textLength="15.41" lengthAdjust="spacingAndGlyphs" style="font-size:5.444px;fill:#555;stroke:#555;stroke-width:0.113px;">정학사</text><text x="671.23" y="380.03" textLength="22.46" lengthAdjust="spacingAndGlyphs" style="font-size:5.444px;fill:#555;stroke:#555;stroke-width:0.113px;">프리랜서</text><text x="786.32" y="173.83" textLength="6.11" lengthAdjust="spacingAndGlyphs" style="font-size:6.111px;fill:#fff;stroke:#fff;stroke-width:0.125px;">결</text><text x="786.55" y="181.53" textLength="6.11" lengthAdjust="spacingAndGlyphs" style="font-size:6.111px;fill:#fff;stroke:#fff;stroke-width:0.125px;">재</text><text x="786.47" y="188.93" textLength="6.11" lengthAdjust="spacingAndGlyphs" style="font-size:6.111px;fill:#fff;stroke:#fff;stroke-width:0.125px;">정</text><text x="786.24" y="196.03" textLength="6.11" lengthAdjust="spacingAndGlyphs" style="font-size:6.111px;fill:#fff;stroke:#fff;stroke-width:0.125px;">보</text><text x="20.34" y="440.60" textLength="78.37" lengthAdjust="spacingAndGlyphs" style="font-size:6.263px;fill:#333;stroke:#333;stroke-width:0.113px;">[회사] 불법 소프트웨어 사용금지</text><text x="557.82" y="440.93" textLength="87.85" lengthAdjust="spacingAndGlyphs" style="font-size:6.111px;fill:#808080;stroke:#808080;stroke-width:0.113px;">최종접속시간 2025-11-18 09:56:06</text><text x="682.53" y="440.78" textLength="91.39" lengthAdjust="spacingAndGlyphs" style="font-size:5.333px;font-weight:bold;fill:#333;stroke:#333;stroke-width:0.050px;">비즈오피스 공지사항 (080-2580-005)</text></svg>

<!-- ===== FOOTER ===== -->
<div class="ln" style="left:0;top:427.7px;width:800px;height:0.8px;background:#e6e6e6"></div>
<svg class="a" style="left:8.8px;top:436.6px" width="7.5" height="4.6" viewBox="0 0 7.5 4.6"><path d="M0.4 1.4H1.8L3.6 0.3V4.3L1.8 3.2H0.4z" fill="#ddd" stroke="#ccc" stroke-width="0.4"/><path d="M5 1.2v2.2M6.6 0.6v3.4" stroke="#ddd" stroke-width="0.6"/></svg>
<svg class="a" style="left:533.9px;top:435.7px" width="7.2" height="7.2" viewBox="0 0 7 7"><path d="M3.5 0.2V6.8M0.2 3.5H6.8" stroke="#222" stroke-width="0.85"/></svg>
<div class="ln" style="left:549px;top:428px;width:0.8px;height:21px;background:#e6e6e6"></div>
<div class="ln" style="left:674px;top:428px;width:0.8px;height:21px;background:#e6e6e6"></div>
<svg class="a" style="left:783.8px;top:435.7px" width="7.2" height="7.2" viewBox="0 0 7 7"><path d="M3.5 0.2V6.8M0.2 3.5H6.8" stroke="#222" stroke-width="0.85"/></svg>

<!-- frame -->
<div class="a" style="left:0;top:0;width:800px;height:450px;border:1px solid #000"></div>
</body></html>
